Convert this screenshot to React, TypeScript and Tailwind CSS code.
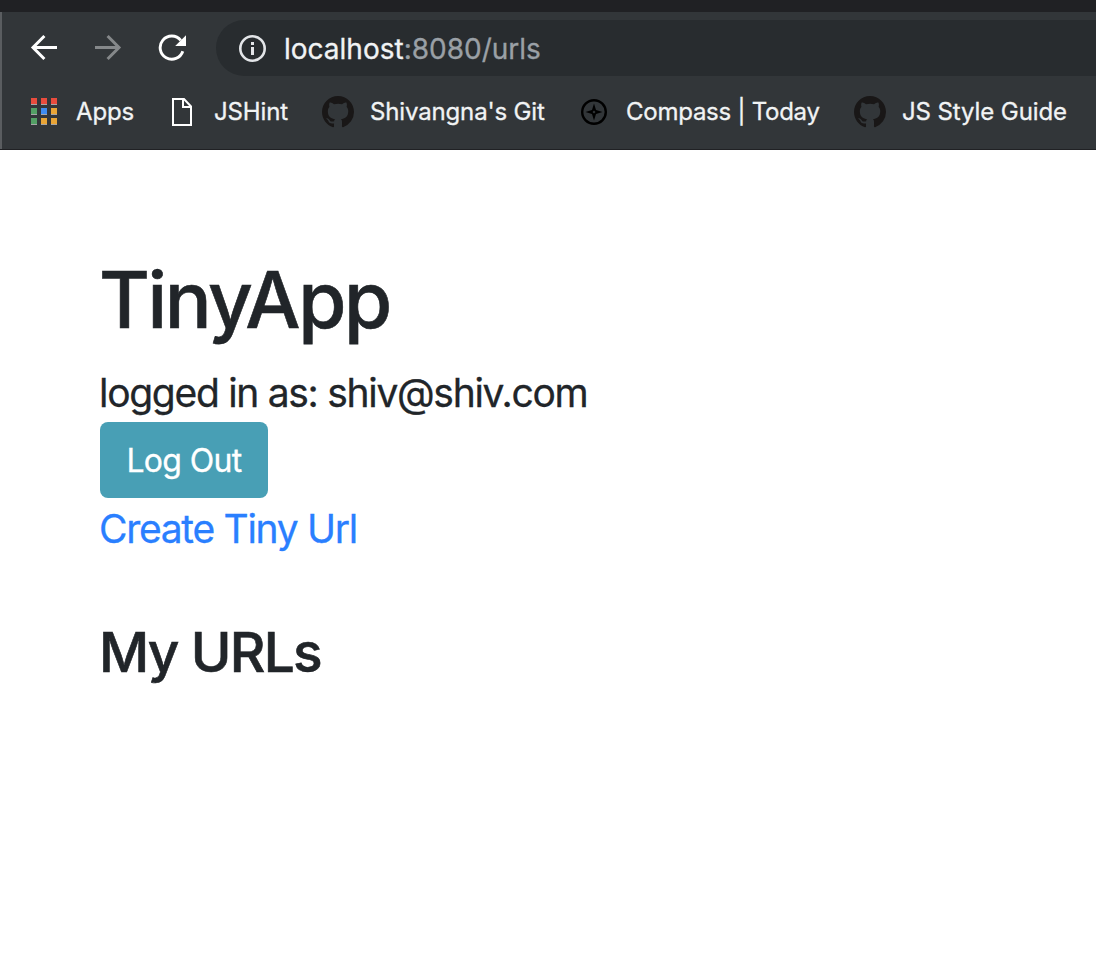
import type { ReactNode } from "react";

function BackIcon() {
  return (
    <svg width="28" height="28" viewBox="0 0 28 28" fill="none" stroke="#ffffff" strokeWidth="3">
      <path d="M27 13.5H3M14.4 2L3 13.5L14.4 25" />
    </svg>
  );
}

function ForwardIcon() {
  return (
    <svg width="28" height="28" viewBox="0 0 28 28" fill="none" stroke="#85888a" strokeWidth="3">
      <path d="M1 13.5H25M13.6 2L25 13.5L13.6 25" />
    </svg>
  );
}

function ReloadIcon() {
  return (
    <svg width="28" height="28" viewBox="0 0 28 28" fill="none">
      <path d="M22.8 6.3A11.6 11.6 0 1 0 24.8 17.2" stroke="#ffffff" strokeWidth="2.9" />
      <path d="M28 1.2V12H17.2Z" fill="#ffffff" />
    </svg>
  );
}

function InfoIcon() {
  return (
    <svg width="28" height="28" viewBox="0 0 28 28" fill="none">
      <circle cx="14.5" cy="14.5" r="12.2" stroke="#e3e5e8" strokeWidth="2.6" />
      <path d="M13 8H16V11H13ZM13 13H16V21H13Z" fill="#e3e5e8" />
    </svg>
  );
}

const appColors = [
  "bg-[#e84c3d]", "bg-[#e84c3d]", "bg-[#e84c3d]",
  "bg-[#53a065]", "bg-[#3f8cf0]", "bg-[#e9a536]",
  "bg-[#53a065]", "bg-[#e9a536]", "bg-[#e9a536]",
];

function AppsIcon() {
  return (
    <span className="mb-px grid grid-cols-3 gap-x-1 gap-y-[3px]">
      {appColors.map((color, i) => (
        <span key={i} className={`h-[7px] w-1.5 border-b border-[#a5a5a7] ${color}`} />
      ))}
    </span>
  );
}

function PageIcon() {
  return (
    <svg width="20" height="28" viewBox="0 0 20 28" fill="none" stroke="#ffffff" strokeWidth="2">
      <path d="M1 1H12L19 8.5V27H1ZM11 1V9H19" />
    </svg>
  );
}

function GithubIcon() {
  return (
    <svg width="32" height="32" viewBox="0 0 16 16" fill="#191717">
      <path d="M8 0C3.58 0 0 3.58 0 8c0 3.54 2.29 6.53 5.47 7.59.4.07.55-.17.55-.38 0-.19-.01-.82-.01-1.49-2.01.37-2.53-.49-2.69-.94-.09-.23-.48-.94-.82-1.13-.28-.15-.68-.52-.01-.53.63-.01 1.08.58 1.23.82.72 1.21 1.87.87 2.33.66.07-.52.28-.87.51-1.07-1.78-.2-3.64-.89-3.64-3.95 0-.87.31-1.59.82-2.15-.08-.2-.36-1.02.08-2.12 0 0 .67-.21 2.2.82.64-.18 1.32-.27 2-.27s1.36.09 2 .27c1.53-1.04 2.2-.82 2.2-.82.44 1.1.16 1.92.08 2.12.51.56.82 1.27.82 2.15 0 3.07-1.87 3.75-3.65 3.95.29.25.54.73.54 1.48 0 1.07-.01 1.93-.01 2.2 0 .21.15.46.55.38A8.01 8.01 0 0 0 16 8c0-4.42-3.58-8-8-8Z" />
    </svg>
  );
}

function CompassIcon() {
  return (
    <svg width="26" height="26" viewBox="0 0 26 26">
      <circle cx="13" cy="13" r="11.8" fill="none" stroke="#000000" strokeWidth="2.4" />
      <path
        fillRule="evenodd"
        fill="#000000"
        d="M13 4.5L15 11L21.5 13L15 15L13 21.5L11 15L4.5 13L11 11ZM13 11.5L11.5 13L13 14.5L14.5 13Z"
      />
    </svg>
  );
}

function Bookmark({ icon, className, children }: { icon: ReactNode; className: string; children: ReactNode }) {
  return (
    <a className={`flex shrink-0 items-center whitespace-nowrap ${className}`}>
      {icon}
      <span>{children}</span>
    </a>
  );
}

export default function App() {
  return (
    <div className="min-h-[960px] w-[1096px] overflow-hidden bg-white font-['Inter',sans-serif] text-[#212529] [-webkit-text-stroke:0.3px]">
      <header className="h-[150px] border-b border-[#202124] bg-[#323639]">
        <div className="h-3 bg-[#202124]" />
        <div className="h-[137px] border-l-2 border-[#5a5d60] pt-2">
          <nav className="flex h-14 items-center">
            <div className="flex w-[214px] items-center gap-9 pl-7">
              <BackIcon />
              <ForwardIcon />
              <ReloadIcon />
            </div>
            <div className="flex h-14 flex-1 items-center rounded-l-full bg-[#282c2f] pl-[22px]">
              <InfoIcon />
              <span className="ml-[18px] pt-px text-[28px] tracking-normal text-[#9aa0a6]">
                <span className="text-[#f1f3f4]">localhost</span>:8080/urls
              </span>
            </div>
          </nav>
          <div className="flex h-[72px] items-center text-[24px] tracking-[-0.15px] text-[#f1f3f4]">
            <Bookmark icon={<AppsIcon />} className="w-[141px] gap-[19px] pl-[29px]">Apps</Bookmark>
            <Bookmark icon={<PageIcon />} className="w-[149px] gap-[22px] pl-[29px]">JSHint</Bookmark>
            <Bookmark icon={<GithubIcon />} className="w-[259px] gap-4 pl-[30px]">Shivangna's Git</Bookmark>
            <Bookmark icon={<CompassIcon />} className="w-[273px] gap-[19px] pl-[30px] tracking-[-0.25px]">Compass | Today</Bookmark>
            <Bookmark icon={<GithubIcon />} className="gap-4 pl-[30px] tracking-[-0.1px]">JS Style Guide</Bookmark>
          </div>
        </div>
      </header>
      <main className="flex flex-col items-start pt-[101px] pl-[100px]">
        <h1 className="-ml-px mb-[15px] text-[78px] leading-[97px] h-24 font-medium tracking-[-2.4px] [-webkit-text-stroke:0.6px]">TinyApp</h1>
        <p className="-ml-px h-[60px] text-[39px] leading-[61px] tracking-[-1.3px]">logged in as: shiv@shiv.com</p>
        <button className="h-[76px] w-[168px] rounded-lg bg-[#489fb5] pt-0.5 text-[32px] leading-[48px] tracking-[-0.65px] text-white">
          Log Out
        </button>
        <a className="-ml-px h-[60px] text-[39px] leading-[61px] tracking-[-1.3px] text-[#2a7fff]">Create Tiny Url</a>
        <h2 className="mt-[61px] -ml-px text-[55px] leading-[67px] font-medium tracking-[-1.7px] [-webkit-text-stroke:0.6px]">My URLs</h2>
      </main>
    </div>
  );
}
